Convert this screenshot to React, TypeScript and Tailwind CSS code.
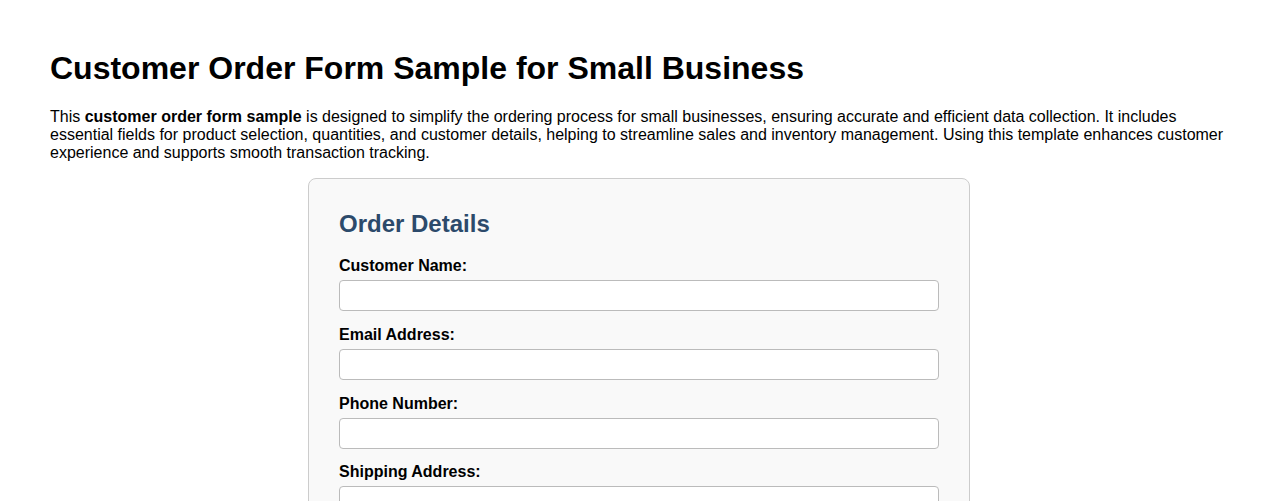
const fields = [
    { id: "name", label: "Customer Name:", type: "text" },
    { id: "email", label: "Email Address:", type: "email" },
    { id: "phone", label: "Phone Number:", type: "tel" },
    { id: "address", label: "Shipping Address:", type: "text" },
];

export default function App() {
    return (
        <div className="min-h-screen bg-white px-[50px] pt-[50px] pb-10 text-black font-['Liberation_Sans',Arial,sans-serif]">
            <h1 className="text-[32px] font-bold leading-[normal]">Customer Order Form Sample for Small Business</h1>
            <p className="mt-[21px] text-[16px] leading-[normal]">
                This <strong className="font-bold">customer order form sample</strong> is designed to simplify the ordering
                process for small businesses, ensuring accurate and efficient data collection. It includes essential fields
                for product selection, quantities, and customer details, helping to streamline sales and inventory
                management. Using this template enhances customer experience and supports smooth transaction tracking.
            </p>
            <form className="mx-auto mt-[16px] max-w-[662px] rounded-lg border border-[#cccccc] bg-[#f9f9f9] px-[30px] pt-[31px] pb-[30px]">
                <h2 className="mb-[19px] text-[24px] font-bold leading-[normal] text-[#2c4a6b]">Order Details</h2>
                {fields.map((field) => (
                    <div key={field.id} className="mb-[14.8px]">
                        <label htmlFor={field.id} className="mb-[5px] block text-[16px] font-bold leading-[normal]">
                            {field.label}
                        </label>
                        <input
                            id={field.id}
                            type={field.type}
                            className="block h-[31px] w-full rounded border border-[#bbbbbb] bg-white px-2 text-[16px]"
                        />
                    </div>
                ))}
            </form>
        </div>
    );
}
